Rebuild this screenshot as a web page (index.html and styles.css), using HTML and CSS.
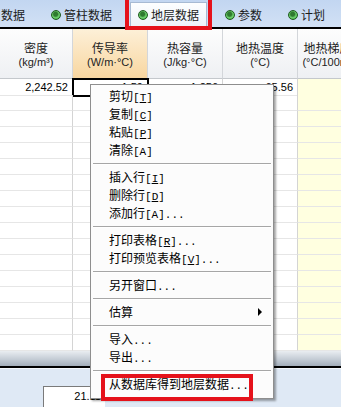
FILE: index.html
```html
<!DOCTYPE html>
<html lang="zh-CN">
<head>
    <meta charset="UTF-8">
    <meta name="viewport" content="width=device-width, initial-scale=1.0">
    <title>地层数据</title>
    <link rel="stylesheet" href="styles.css">
</head>
<body>
<div class="window">

    <div class="tabs">
        <div class="tab"><span>数据</span></div>
        <div class="tab"><i class="dot"></i><span>管柱数据</span></div>
        <div class="tab active"><i class="dot"></i><span>地层数据</span></div>
        <div class="tab"><i class="dot"></i><span>参数</span></div>
        <div class="tab"><i class="dot"></i><span>计划</span></div>
    </div>

    <div class="sheet">
        <div class="row head">
            <div class="hcell">密度<span class="unit">(kg/m³)</span></div>
            <div class="hcell current">传导率<span class="unit">(W/m·°C)</span></div>
            <div class="hcell">热容量<span class="unit">(J/kg·°C)</span></div>
            <div class="hcell">地热温度<span class="unit">(°C)</span></div>
            <div class="hcell">地热梯度<span class="unit">(°C/100m)</span></div>
        </div>
        <div class="row">
            <div class="cell">2,242.52</div>
            <div class="cell sel">1.59</div>
            <div class="cell">1.256</div>
            <div class="cell">65.56</div>
            <div class="cell last"></div>
        </div>
        <div class="row"><div class="cell"></div><div class="cell"></div><div class="cell"></div><div class="cell"></div><div class="cell last"></div></div>
        <div class="row"><div class="cell"></div><div class="cell"></div><div class="cell"></div><div class="cell"></div><div class="cell last"></div></div>
        <div class="row"><div class="cell"></div><div class="cell"></div><div class="cell"></div><div class="cell"></div><div class="cell last"></div></div>
        <div class="row"><div class="cell"></div><div class="cell"></div><div class="cell"></div><div class="cell"></div><div class="cell last"></div></div>
        <div class="row"><div class="cell"></div><div class="cell"></div><div class="cell"></div><div class="cell"></div><div class="cell last"></div></div>
        <div class="row"><div class="cell"></div><div class="cell"></div><div class="cell"></div><div class="cell"></div><div class="cell last"></div></div>
        <div class="row"><div class="cell"></div><div class="cell"></div><div class="cell"></div><div class="cell"></div><div class="cell last"></div></div>
        <div class="row"><div class="cell"></div><div class="cell"></div><div class="cell"></div><div class="cell"></div><div class="cell last"></div></div>
        <div class="row"><div class="cell"></div><div class="cell"></div><div class="cell"></div><div class="cell"></div><div class="cell last"></div></div>
        <div class="row"><div class="cell"></div><div class="cell"></div><div class="cell"></div><div class="cell"></div><div class="cell last"></div></div>
        <div class="row"><div class="cell"></div><div class="cell"></div><div class="cell"></div><div class="cell"></div><div class="cell last"></div></div>
        <div class="row"><div class="cell"></div><div class="cell"></div><div class="cell"></div><div class="cell"></div><div class="cell last"></div></div>
        <div class="row"><div class="cell"></div><div class="cell"></div><div class="cell"></div><div class="cell"></div><div class="cell last"></div></div>
        <div class="row"><div class="cell"></div><div class="cell"></div><div class="cell"></div><div class="cell"></div><div class="cell last"></div></div>
        <div class="row"><div class="cell"></div><div class="cell"></div><div class="cell"></div><div class="cell"></div><div class="cell last"></div></div>
        <div class="row"><div class="cell"></div><div class="cell"></div><div class="cell"></div><div class="cell"></div><div class="cell last"></div></div>
        <div class="row"><div class="cell"></div><div class="cell"></div><div class="cell"></div><div class="cell"></div><div class="cell last"></div></div>
        <div class="row"><div class="cell"></div><div class="cell"></div><div class="cell"></div><div class="cell"></div><div class="cell last"></div></div>
    </div>

    <div class="hbar"></div>

    <div class="footer">
        <div class="field">21.11</div>
    </div>

    <ul class="menu">
        <li>剪切<span class="key">[<u>T</u>]</span></li>
        <li>复制<span class="key">[<u>C</u>]</span></li>
        <li>粘贴<span class="key">[<u>P</u>]</span></li>
        <li>清除<span class="key">[A]</span></li>
        <li class="sep"></li>
        <li>插入行<span class="key">[<u>I</u>]</span></li>
        <li>删除行<span class="key">[<u>D</u>]</span></li>
        <li>添加行<span class="key">[A]...</span></li>
        <li class="sep"></li>
        <li>打印表格<span class="key">[<u>R</u>]...</span></li>
        <li>打印预览表格<span class="key">[<u>V</u>]...</span></li>
        <li class="sep"></li>
        <li>另开窗口<span class="key">...</span></li>
        <li class="sep"></li>
        <li class="sub">估算</li>
        <li class="sep"></li>
        <li>导入<span class="key">...</span></li>
        <li>导出<span class="key">...</span></li>
        <li class="sep"></li>
        <li>从数据库得到地层数据<span class="key">...</span></li>
    </ul>

    <div class="mark mark-tab"></div>
    <div class="mark mark-item"></div>
</div>
</body>
</html>
```

FILE: styles.css
```css
body {
    margin: 0;
    font-family: "Noto Sans CJK SC", sans-serif;
    font-size: 12px;
    color: #000;
    overflow: hidden;
}

.window {
    position: relative;
    width: 341px;
    height: 407px;
    overflow: hidden;
    background-color: #dfe9f5;
}

/* tab strip */
.tabs {
    display: flex;
    align-items: flex-end;
    gap: 12px;
    height: 27px;
    margin-left: -6px;
    background: linear-gradient(#c2d6f1, #d2e1f5);
    white-space: nowrap;
}

.tab {
    display: flex;
    align-items: center;
    gap: 3px;
    height: 24px;
    padding: 0 7px;
    color: #1b1b1b;
    line-height: 24px;
}

.tab.active {
    margin: 0 -1px;
    background: linear-gradient(#fdfeff, #edf2f9);
    border: 1px solid #a7bad3;
    border-bottom: none;
}

.dot {
    width: 8px;
    height: 8px;
    border-radius: 50%;
    border: 1px solid #1f5a1f;
    background: radial-gradient(circle at 45% 40%, #2f7a2f 0, #2f7a2f 30%, #6fd36f 55%, #2e9a2e 100%);
}

/* grid */
.sheet {
    height: 322px;
    overflow: hidden;
    border-top: 2px solid #000;
    background-color: #fff;
}

.row {
    display: grid;
    grid-template-columns: 73px 75px 75px 75px 60px;
    height: 16px;
}

.row.head {
    height: 50px;
}

.hcell {
    display: flex;
    flex-direction: column;
    align-items: center;
    justify-content: center;
    padding-top: 2px;
    box-sizing: border-box;
    line-height: 14px;
    color: #222;
    background: linear-gradient(#fdfdfd, #eef0f3);
    border-right: 1px solid #d3d6da;
    border-bottom: 1px solid #c4c8cc;
}

.hcell.current {
    background: linear-gradient(#fdf0d8, #f8d6a0);
}

.unit {
    font-family: "Liberation Sans", sans-serif;
    font-size: 11px;
}

.cell {
    box-sizing: border-box;
    padding-right: 4px;
    text-align: right;
    font-family: "Liberation Sans", sans-serif;
    font-size: 11px;
    line-height: 16px;
    border-right: 1px solid #d4d4d4;
    border-bottom: 1px solid #e6e6e6;
}

.cell.last {
    background-color: #ffffe0;
}

.cell.sel {
    outline: 2px solid #000;
    outline-offset: -1px;
}

.hbar {
    height: 15px;
    background: linear-gradient(#e9edf1, #c4ccd5 55%, #a3aeba);
    border-bottom: 2px solid #000;
}

.footer {
    height: 39px;
    padding: 17px 0 0 43px;
    box-sizing: border-box;
    border-top: 1px solid #f4f8fc;
}

.field {
    width: 62px;
    height: 24px;
    box-sizing: border-box;
    padding: 3px 4px 0 0;
    text-align: right;
    font-family: "Liberation Sans", sans-serif;
    font-size: 11px;
    background-color: #fff;
    border-top: 1px solid #7a7a7a;
    border-left: 1px solid #7a7a7a;
}

/* context menu */
.menu {
    position: absolute;
    left: 90px;
    top: 84px;
    width: 182px;
    margin: 0;
    padding: 2px 0 5px;
    list-style: none;
    background-color: #fcfcfc;
    border: 1px solid #8e8e8e;
    box-shadow: 2px 2px 2px rgba(0, 0, 0, 0.35);
}

.menu li {
    height: 18px;
    padding-left: 18px;
    line-height: 18px;
    white-space: nowrap;
    position: relative;
}

.menu .key {
    font-family: "Liberation Mono", monospace;
    font-size: 11px;
}

.menu li.sep {
    height: 9px;
    box-sizing: border-box;
    padding: 4px 0 0;
    margin: 0 2px;
}

.menu li.sep::after {
    content: "";
    display: block;
    border-top: 1px solid #a6a6a6;
    border-bottom: 1px solid #fff;
}

.menu li.sub::after {
    content: "";
    position: absolute;
    right: 11px;
    top: 5px;
    border-left: 4px solid #000;
    border-top: 4px solid transparent;
    border-bottom: 4px solid transparent;
}

/* red highlight boxes */
.mark {
    position: absolute;
    border: 4px solid #e5121b;
}

.mark-tab {
    left: 125px;
    top: -4px;
    width: 79px;
    height: 26px;
}

.mark-item {
    left: 101px;
    top: 374px;
    width: 144px;
    height: 19px;
}
```
